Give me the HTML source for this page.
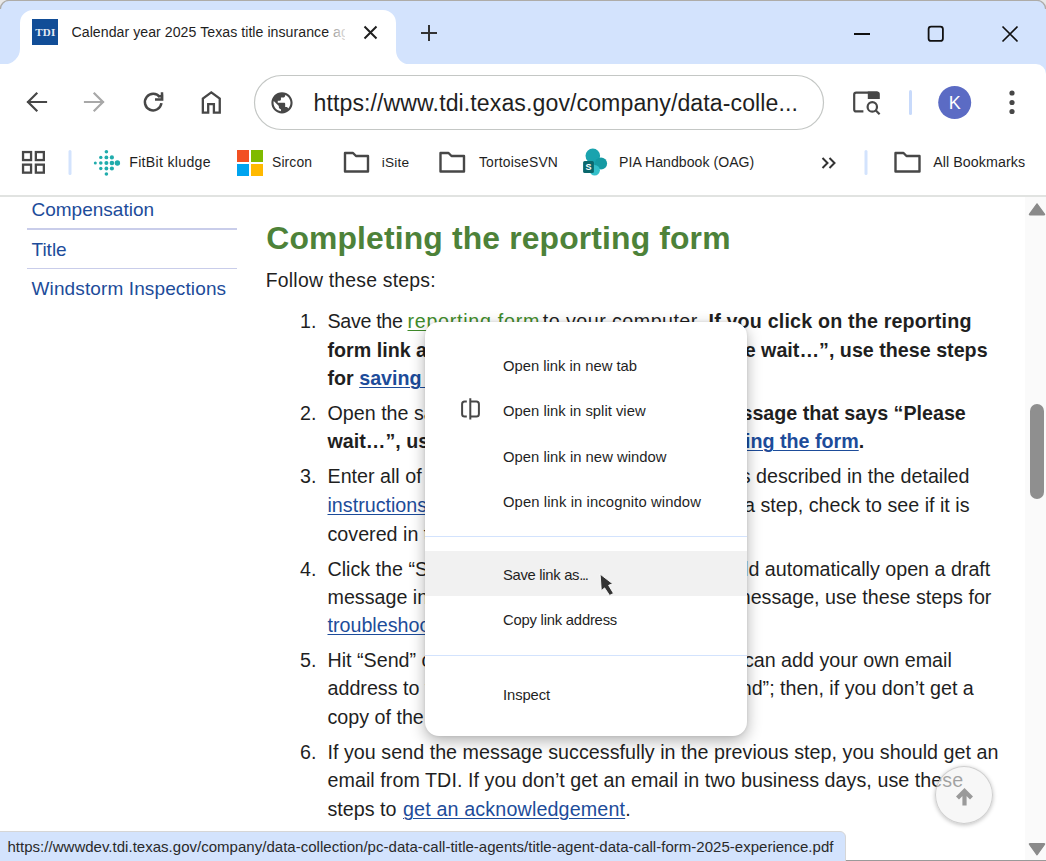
<!DOCTYPE html>
<html><head><meta charset="utf-8">
<style>
*{margin:0;padding:0;box-sizing:border-box}
html,body{width:1046px;height:861px;overflow:hidden;background:#fff}
body{position:relative;font-family:"Liberation Sans",sans-serif;color:#1f1f1f}
.a{position:absolute;white-space:nowrap}
#tabstrip{position:absolute;left:0;top:0;width:1046px;height:80px;background:#d3e3fd}
#toolbar{position:absolute;left:0;top:64px;width:1046px;height:131px;background:#fff;border-radius:0 10px 0 0}
#bline{position:absolute;left:0;top:195px;width:1046px;height:2px;background:#e1e3e1}
.bm{position:absolute;top:154px;font-size:14.15px;line-height:17px;color:#1f1f1f;white-space:nowrap}
.t{position:absolute;white-space:nowrap}
u{text-decoration:underline;text-decoration-thickness:1px;text-underline-offset:2px}
#page{position:absolute;left:0;top:0;width:1046px;height:861px;clip-path:inset(197px 0 0 0)}
.side{position:absolute;left:31.5px;font-size:19px;line-height:24px;color:#1d4c9a;white-space:nowrap}
.sdiv{position:absolute;left:27px;width:210px;height:1.5px;background:#c9cdea}
#menu{position:absolute;left:425px;top:322.3px;width:322px;height:413.7px;background:#fff;border-radius:14px;box-shadow:0 5px 15px rgba(0,0,0,.3),0 0 3px rgba(0,0,0,.1);overflow:hidden}
.mi{position:absolute;left:78px;font-size:14.8px;line-height:18px;color:#1f1f1f;white-space:nowrap}
.msep{position:absolute;left:0;width:322px;height:1px;background:#d3e3fd}
#m1{letter-spacing:-0.004px}#m2{letter-spacing:0.014px}#m3{letter-spacing:0.028px}#m4{letter-spacing:0.105px}#m6{letter-spacing:-0.212px}#m7{letter-spacing:-0.103px}</style></head><body>

<div id="tabstrip"></div>
<div id="toolbar"></div>
<div id="bline"></div>

<!-- TAB STRIP -->
<svg class="a" style="left:0;top:0" width="1046" height="66">
<path d="M0,0 H9 A9,9 0 0 0 0,9 Z M1046,0 H1037 A9,9 0 0 1 1046,9 Z" fill="#e8e8e8"/>
<path d="M0.4,9 A8.6,8.6 0 0 1 9,0.4 L1037,0.4 A8.6,8.6 0 0 1 1045.6,9" fill="none" stroke="#aeaca8" stroke-width="1.3"/>
<path d="M4,64.5 A16,16 0 0 0 20,48.5 L20,23 A13,13 0 0 1 33,10 L383,10 A13,13 0 0 1 396,23 L396,50.5 A14,14 0 0 0 410,64.5 Z" fill="#fff"/>
<rect x="32" y="19" width="26" height="26" fill="#114d97"/>
<text x="45.3" y="36" font-family="Liberation Serif" font-weight="bold" font-size="11" fill="#e4eaf3" text-anchor="middle" letter-spacing="0.2">TDI</text>
<path d="M364.5,26.5 L376.5,38.5 M376.5,26.5 L364.5,38.5" stroke="#1f1f1f" stroke-width="2"/>
<path d="M429,25 V41 M421,33 H437" stroke="#333" stroke-width="2"/>
<path d="M854,34 H870" stroke="#111" stroke-width="2"/>
<rect x="928.6" y="26.6" width="14.3" height="14.3" rx="2.5" fill="none" stroke="#111" stroke-width="1.8"/>
<path d="M1002.5,26.5 L1017.5,41.5 M1017.5,26.5 L1002.5,41.5" stroke="#111" stroke-width="1.7"/>
</svg>
<div class="a" style="left:71.5px;top:24px;width:273px;overflow:hidden;font-size:14.15px;line-height:17px;letter-spacing:0.04px;color:#1f1f1f">Calendar year 2025 Texas title insurance <span style="color:#8a8a8a">ag</span></div>
<div class="a" style="left:329px;top:18px;width:16px;height:26px;background:linear-gradient(90deg,rgba(255,255,255,0),rgba(255,255,255,.7))"></div>

<!-- TOOLBAR -->
<svg class="a" style="left:0;top:64px" width="1046" height="131">
<g fill="none" stroke="#474747" stroke-width="2.2" stroke-linecap="square">
<path d="M28,38 H46 M36.5,29.5 L28,38 L36.5,46.5"/>
</g>
<g fill="none" stroke="#a8a8a8" stroke-width="2.2" stroke-linecap="square">
<path d="M103,38 H85 M94.5,29.5 L103,38 L94.5,46.5"/>
</g>
<g fill="none" stroke="#474747" stroke-width="2.5">
<path d="M159.9,33.2 A8.3,8.3 0 1 0 161.42,39.16"/>
<path d="M158.6,31.2 L163.2,36.7 L163.2,30.5 Z" fill="#474747" stroke="none"/>
<path d="M155,35.45 H162 V28.3" stroke-linejoin="miter"/>
</g>
<path d="M202.85,48.55 V34.6 L211.3,28.4 L219.75,34.6 V48.55 H213.9 V40.1 H208.2 V48.55 Z" fill="none" stroke="#474747" stroke-width="2.3" stroke-linejoin="miter"/>
<rect x="254.5" y="11.5" width="569" height="54" rx="27" fill="#fff" stroke="#c4c7c5" stroke-width="1.2"/>
<path transform="translate(269.28,26.08) scale(1.06)" fill="#474747" d="M12 2C6.48 2 2 6.48 2 12s4.48 10 10 10 10-4.48 10-10S17.52 2 12 2zm-1 17.93c-3.95-.49-7-3.85-7-7.93 0-.62.08-1.21.21-1.79L9 15v1c0 1.1.9 2 2 2v1.93zm6.9-2.54c-.26-.81-1-1.39-1.9-1.39h-1v-3c0-.55-.45-1-1-1H8v-2h2c.55 0 1-.45 1-1V7h2c1.1 0 2-.9 2-2v-.41c2.93 1.19 5 4.06 5 7.41 0 2.08-.8 3.97-2.1 5.39z"/>
<g fill="none" stroke="#474747" stroke-width="2.2">
<path d="M863.4,47.4 H856.2 A2,2 0 0 1 854.2,45.4 V30.6 A2,2 0 0 1 856.2,28.6 H877.5"/>
<circle cx="872.3" cy="42.9" r="4.7"/>
<path d="M875.6,46.2 L879.6,50.2"/>
</g>
<path d="M867.8,27.5 H877.3 A2.5,2.5 0 0 1 879.8,30 V35 H867.8 Z" fill="#474747"/>
<rect x="909" y="26" width="3" height="25" rx="1.5" fill="#c8dafb"/>
<circle cx="954.7" cy="38.5" r="16.5" fill="#5b6bc4"/>
<text x="954.7" y="45" font-size="18" fill="#fff" text-anchor="middle" font-family="Liberation Sans">K</text>
<circle cx="1012" cy="29" r="2.6" fill="#474747"/>
<circle cx="1012" cy="38.5" r="2.6" fill="#474747"/>
<circle cx="1012" cy="47.5" r="2.6" fill="#474747"/>
</svg>
<div class="a" style="left:313.5px;top:88.6px;font-size:23.1px;letter-spacing:0.095px;line-height:28px;color:#1f1f1f">https://www.tdi.texas.gov/company/data-colle...</div>

<!-- BOOKMARKS -->
<svg class="a" style="left:0;top:140px" width="1046" height="55">
<g fill="none" stroke="#474747" stroke-width="2.3">
<rect x="23.05" y="12.05" width="8" height="8"/>
<rect x="35.85" y="12.05" width="8" height="8"/>
<rect x="23.05" y="24.65" width="8" height="8"/>
<rect x="35.85" y="24.65" width="8" height="8"/>
</g>
<rect x="68.5" y="10" width="3" height="25" rx="1.5" fill="#d3e3fd"/>
<g fill="#20acac">
<circle cx="106.4" cy="11.7" r="1.8"/>
<circle cx="100.8" cy="17.4" r="1.7"/><circle cx="106.4" cy="17.4" r="1.9"/><circle cx="111.9" cy="17.4" r="2.1"/>
<circle cx="95.3" cy="23" r="1.5"/><circle cx="100.8" cy="23" r="1.8"/><circle cx="106.4" cy="23" r="2"/><circle cx="111.9" cy="23" r="2.3"/><circle cx="117.4" cy="23" r="2.7"/>
<circle cx="100.8" cy="28.5" r="1.7"/><circle cx="106.4" cy="28.5" r="1.9"/><circle cx="111.9" cy="28.5" r="2.1"/>
<circle cx="106.4" cy="34" r="1.8"/>
</g>
<rect x="237" y="10" width="12" height="12" fill="#f25022"/>
<rect x="251" y="10" width="12" height="12" fill="#7fba00"/>
<rect x="237" y="24" width="12" height="12" fill="#00a4ef"/>
<rect x="251" y="24" width="12" height="12" fill="#ffb900"/>
<g fill="none" stroke="#474747" stroke-width="2.4" stroke-linejoin="round">
<path d="M345,13 H353 L356,16 H368 V31.5 H345 Z"/>
<path d="M440.5,13 H448.5 L451.5,16 H464 V31.5 H440.5 Z"/>
<path d="M895.5,13 H903.5 L906.5,16 H919.5 V31.5 H895.5 Z"/>
</g>
<circle cx="592.8" cy="15.8" r="7.3" fill="#1aa3ae"/>
<circle cx="597" cy="22" r="4.5" fill="#1aa3ae"/>
<circle cx="601" cy="23.5" r="6.1" fill="#159aa3"/>
<circle cx="594.7" cy="30.2" r="5.2" fill="#33c0ca"/>
<rect x="583.1" y="21" width="10.8" height="12" rx="1.6" fill="#0a676c"/>
<text x="588.5" y="30.2" font-size="9" font-weight="bold" fill="#fff" text-anchor="middle" font-family="Liberation Sans">S</text>
<path d="M822.5,18 L827.5,23 L822.5,28 M829.5,18 L834.5,23 L829.5,28" fill="none" stroke="#333" stroke-width="2"/>
<rect x="864.5" y="10" width="3" height="25" rx="1.5" fill="#d3e3fd"/>
</svg>
<div class="bm" style="left:129.2px;letter-spacing:0.3px">FitBit kludge</div>
<div class="bm" style="left:272px;font-size:13.95px;letter-spacing:0.1px">Sircon</div>
<div class="bm" style="left:381.8px;font-size:13.7px;letter-spacing:0.15px">iSite</div>
<div class="bm" style="left:478.9px;font-size:13.9px;letter-spacing:0.18px">TortoiseSVN</div>
<div class="bm" style="left:619px;font-size:14.07px;letter-spacing:0.05px">PIA Handbook (OAG)</div>
<div class="bm" style="left:933.2px;font-size:14.24px;letter-spacing:0.08px">All Bookmarks</div>


<div id="page">
<div class="side" style="top:197.8px">Compensation</div>
<div class="sdiv" style="top:228px"></div>
<div class="side" style="top:237.5px">Title</div>
<div class="sdiv" style="top:267.6px"></div>
<div class="side" style="top:276.8px;letter-spacing:0.12px">Windstorm Inspections</div>
<div class="t" style="left:266.3px;top:219px;font-size:31.85px;letter-spacing:0.15px;line-height:38px;font-weight:bold;color:#4d8239">Completing the reporting form</div>
<div class="t" style="left:265.8px;top:266px;font-size:19.39px;letter-spacing:0.22px;line-height:28px;color:#1f1f1f">Follow these steps:</div>

<div class="t" style="top:307.27px;font-size:19.7px;line-height:28px;color:#1f1f1f;left:300px;">1.</div>
<div class="t" id="f_save" style="top:307.27px;font-size:19.7px;line-height:28px;color:#1f1f1f;left:327.5px;letter-spacing:-0.340px;">Save the</div>
<div class="t" id="f_rf" style="top:307.27px;font-size:19.7px;line-height:28px;color:#1f1f1f;left:407.5px;letter-spacing:0.717px;"><u style="color:#3f8a2a">reporting form</u></div>
<div class="t" id="f_tyc" style="top:307.27px;font-size:19.7px;line-height:28px;color:#1f1f1f;left:542.8px;letter-spacing:0.453px;">to your computer.</div>
<div class="t" id="f_ifyou" style="top:307.27px;font-size:19.7px;line-height:28px;color:#1f1f1f;font-weight:bold;left:708.5px;letter-spacing:0.170px;">If you click on the reporting</div>
<div class="t" style="top:335.77px;font-size:19.7px;line-height:28px;color:#1f1f1f;font-weight:bold;left:327.5px;">form link and get a</div>
<div class="t" style="top:335.77px;font-size:19.7px;line-height:28px;color:#1f1f1f;font-weight:bold;right:58.40px;">message that says “Please wait…”, use these steps</div>
<div class="t" style="top:364.27px;font-size:19.7px;line-height:28px;color:#1f1f1f;font-weight:bold;left:327.5px;">for <u style="color:#1d4c9a">saving the form</u>.</div>
<div class="t" style="top:398.77px;font-size:19.7px;line-height:28px;color:#1f1f1f;left:300px;">2.</div>
<div class="t" style="top:398.77px;font-size:19.7px;line-height:28px;color:#1f1f1f;left:327.5px;">Open the saved form.</div>
<div class="t" style="top:398.77px;font-size:19.7px;line-height:28px;color:#1f1f1f;font-weight:bold;right:80.20px;">If you get a message that says “Please</div>
<div class="t" style="top:427.27px;font-size:19.7px;line-height:28px;color:#1f1f1f;font-weight:bold;left:327.5px;">wait…”, use these steps for</div>
<div class="t" style="top:427.27px;font-size:19.7px;line-height:28px;color:#1f1f1f;font-weight:bold;right:181.80px;"><u style="color:#1d4c9a">troubleshooting the form</u>.</div>
<div class="t" style="top:462.27px;font-size:19.7px;line-height:28px;color:#1f1f1f;left:300px;">3.</div>
<div class="t" style="top:462.27px;font-size:19.7px;line-height:28px;color:#1f1f1f;left:327.5px;">Enter all of your information into the form as</div>
<div class="t" style="top:462.27px;font-size:19.7px;line-height:28px;color:#1f1f1f;right:76.50px;">the form as described in the detailed</div>
<div class="t" style="top:491.27px;font-size:19.7px;line-height:28px;color:#1f1f1f;left:327.5px;"><u style="color:#1d4c9a">instructions</u>. If you have</div>
<div class="t" style="top:491.27px;font-size:19.7px;line-height:28px;color:#1f1f1f;right:76.50px;">you have questions about a step, check to see if it is</div>
<div class="t" style="top:519.77px;font-size:19.7px;line-height:28px;color:#1f1f1f;left:327.5px;">covered in the FAQ.</div>
<div class="t" style="top:554.77px;font-size:19.7px;line-height:28px;color:#1f1f1f;left:300px;">4.</div>
<div class="t" style="top:554.77px;font-size:19.7px;line-height:28px;color:#1f1f1f;left:327.5px;">Click the “Submit” button. This should</div>
<div class="t" style="top:554.77px;font-size:19.7px;line-height:28px;color:#1f1f1f;right:55.70px;">This should automatically open a draft</div>
<div class="t" style="top:583.47px;font-size:19.7px;line-height:28px;color:#1f1f1f;left:327.5px;">message in your email program. If you</div>
<div class="t" style="top:583.47px;font-size:19.7px;line-height:28px;color:#1f1f1f;right:54.60px;">If you don’t get a message, use these steps for</div>
<div class="t" style="top:611.27px;font-size:19.7px;line-height:28px;color:#1f1f1f;left:327.5px;"><u style="color:#1d4c9a">troubleshooting the form</u>.</div>
<div class="t" style="top:646.27px;font-size:19.7px;line-height:28px;color:#1f1f1f;left:300px;">5.</div>
<div class="t" style="top:646.27px;font-size:19.7px;line-height:28px;color:#1f1f1f;left:327.5px;">Hit “Send” on the email message. You</div>
<div class="t" style="top:646.27px;font-size:19.7px;line-height:28px;color:#1f1f1f;right:94.20px;">You can add your own email</div>
<div class="t" style="top:673.77px;font-size:19.7px;line-height:28px;color:#1f1f1f;left:327.5px;">address to the “CC” line if you</div>
<div class="t" style="top:673.77px;font-size:19.7px;line-height:28px;color:#1f1f1f;right:72.20px;">if you want a copy of the “Send”; then, if you don’t get a</div>
<div class="t" style="top:703.17px;font-size:19.7px;line-height:28px;color:#1f1f1f;left:327.5px;">copy of the email</div>
<div class="t" style="top:737.77px;font-size:19.7px;line-height:28px;color:#1f1f1f;left:300px;">6.</div>
<div class="t" id="f_6a" style="top:737.77px;font-size:19.7px;line-height:28px;color:#1f1f1f;left:327.5px;letter-spacing:0.030px;">If you send the message successfully in the previous step, you should get an</div>
<div class="t" id="f_6b" style="top:766.07px;font-size:19.7px;line-height:28px;color:#1f1f1f;left:327.5px;letter-spacing:0.049px;">email from TDI. If you don’t get an email in two business days, use these</div>
<div class="t" style="top:794.77px;font-size:19.7px;line-height:28px;color:#1f1f1f;left:327.5px;">steps to </div>
<div class="t" id="f_6c" style="top:794.77px;font-size:19.7px;line-height:28px;color:#1f1f1f;left:403px;letter-spacing:0.148px;"><u style="color:#1d4c9a">get an acknowledgement</u>.</div>
<div style="position:absolute;left:1025px;top:197px;width:21px;height:664px;background:#fafafa"></div>
<div style="position:absolute;left:1030px;top:404px;width:14px;height:95px;border-radius:7px;background:#8f8f8f"></div>
<svg class="a" style="left:1025px;top:197px" width="21" height="664">
<path d="M12,6.8 L19.5,17.2 Q20,18 19,18 H5 Q4,18 4.5,17.2 Z" fill="#8a8a8a" stroke="#8a8a8a" stroke-width="1.2" stroke-linejoin="round"/>
<path d="M12,657.8 L19.5,647.4 Q20,646.6 19,646.6 H5 Q4,646.6 4.5,647.4 Z" fill="#8a8a8a" stroke="#8a8a8a" stroke-width="1.2" stroke-linejoin="round"/>
</svg>
<div style="position:absolute;left:845px;top:859.6px;width:201px;height:1.4px;background:#9a9a9a"></div>
<div style="position:absolute;left:-1px;top:831px;width:847px;height:31px;background:#d3e3fd;border:1px solid #d6d6d6;border-radius:0 6px 0 0"></div>
<div class="t" style="left:7.5px;top:838px;font-size:15px;line-height:18px;letter-spacing:0.02px;color:#2a2a2a">https://wwwdev.tdi.texas.gov/company/data-collection/pc-data-call-title-agents/title-agent-data-call-form-2025-experience.pdf</div>
<div style="position:absolute;left:935px;top:766px;width:58px;height:58px;border-radius:50%;background:rgba(242,242,242,.62);border:1px solid rgba(180,180,180,.6);box-shadow:0 1px 4px rgba(0,0,0,.25)"></div>
<svg class="a" style="left:935px;top:768px" width="58" height="58">
<path d="M29.5,37.5 V24 M22.5,30 L29.5,23 L36.5,30" fill="none" stroke="#9a9a9a" stroke-width="4.2" stroke-linecap="butt"/>
</svg>

</div>
<div id="menu">
<div class="mi" id="m1" style="top:34.5px">Open link in new tab</div>
<svg class="a" style="left:35px;top:76px" width="24" height="24">
<path d="M6.8,3.6 H4.6 A2.5,2.5 0 0 0 2.1,6.1 V16.1 A2.5,2.5 0 0 0 4.6,18.6 H6.8 M10.3,0.3 V21.4 M10.3,3.6 H16.4 A2.5,2.5 0 0 1 18.9,6.1 V16.1 A2.5,2.5 0 0 1 16.4,18.6 H10.3" fill="none" stroke="#474747" stroke-width="2"/>
</svg>
<div class="mi" id="m2" style="top:80.0px">Open link in split view</div>
<div class="mi" id="m3" style="top:125.5px">Open link in new window</div>
<div class="mi" id="m4" style="top:171.0px">Open link in incognito window</div>
<div class="msep" style="top:213.5px"></div>
<div style="position:absolute;left:0;top:228.7px;width:322px;height:44.6px;background:#f1f1f1"></div>
<div class="mi" id="m5" style="top:244.0px;letter-spacing:-0.3px">Save link as<span style="letter-spacing:-1.3px">...</span></div>
<div class="mi" id="m6" style="top:289.0px">Copy link address</div>
<div class="msep" style="top:333px"></div>
<div class="mi" id="m7" style="top:363.4px">Inspect</div>
</div>
<svg class="a" style="left:596px;top:570px" width="24" height="30">
<path d="M4.1,4.1 L5.3,20.7 L8.6,17.9 L13.6,25.4 L17.5,23.4 L12.6,15.3 L16.7,13.8 Z" fill="#333" stroke="#fff" stroke-width="0.9" stroke-linejoin="round"/>
</svg>

</body></html>
